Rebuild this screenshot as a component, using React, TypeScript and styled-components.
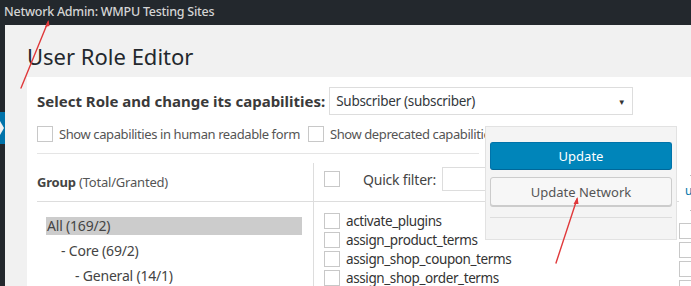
import React from 'react';
import styled, { createGlobalStyle } from 'styled-components';

type GroupItem = { label: string; level: number; active?: boolean };

const groups: GroupItem[] = [
  { label: 'All (169/2)', level: 0, active: true },
  { label: '- Core (69/2)', level: 1 },
  { label: '- General (14/1)', level: 2 },
];

const caps = [
  'activate_plugins',
  'assign_product_terms',
  'assign_shop_coupon_terms',
  'assign_shop_order_terms',
];

const GlobalStyle = createGlobalStyle`
  html, body {
    margin: 0;
    padding: 0;
    overflow: hidden;
  }
  body {
    font-family: "Noto Sans", "Open Sans", sans-serif;
    color: #444;
  }
`;

export default function App() {
  return (
    <>
      <GlobalStyle />
      <Screen>
        <TitleBar>Network Admin: WMPU Testing Sites</TitleBar>
        <Body>
          <Sidebar>
            <ActiveItem />
          </Sidebar>
          <Main>
            <Heading>User Role Editor</Heading>
            <Panel>
              <RoleRow>
                <RoleLabel>Select Role and change its capabilities:</RoleLabel>
                <RoleSelect>
                  <span>Subscriber (subscriber)</span>
                  <Caret>▼</Caret>
                </RoleSelect>
              </RoleRow>
              <OptionsRow>
                <Option>
                  <Box />
                  Show capabilities in human readable form
                </Option>
                <Option>
                  <Box />
                  Show deprecated capabilities
                </Option>
              </OptionsRow>
              <Columns>
                <GroupColumn>
                  <ColumnHead>
                    <b>Group</b>&nbsp;(Total/Granted)
                  </ColumnHead>
                  <GroupList>
                    {groups.map((g) => (
                      <GroupRow key={g.label} $level={g.level} $active={g.active}>
                        {g.label}
                      </GroupRow>
                    ))}
                  </GroupList>
                </GroupColumn>
                <CapsColumn>
                  <ColumnHead>
                    <Box />
                    <FilterLabel>Quick filter:</FilterLabel>
                    <FilterInput />
                  </ColumnHead>
                  <CapsList>
                    {caps.map((c) => (
                      <CapRow key={c}>
                        <Box />
                        <CapName>{c}</CapName>
                      </CapRow>
                    ))}
                  </CapsList>
                </CapsColumn>
                <SideColumn>
                  <SideRule />
                  <SideLink>u</SideLink>
                  <SideRule />
                  <SideBoxes>
                    {caps.map((c) => (
                      <Box key={c} />
                    ))}
                  </SideBoxes>
                </SideColumn>
              </Columns>
            </Panel>
          </Main>
        </Body>
        <UpdateBox>
          <PrimaryButton>Update</PrimaryButton>
          <SecondaryButton>Update Network</SecondaryButton>
          <BoxRule />
        </UpdateBox>
        <Arrows width="691" height="286" viewBox="0 0 691 286">
          <g stroke="#e0393b" strokeWidth="1.4" fill="none" strokeLinecap="round">
            <line x1="21" y1="88" x2="48" y2="22" />
            <line x1="556" y1="263" x2="577" y2="199" />
          </g>
          <g fill="#e0393b">
            <polygon points="48.5,20 45,27 49.5,26" />
            <polygon points="577.5,197 573.5,204 578.5,204" />
          </g>
        </Arrows>
      </Screen>
    </>
  );
}

const Screen = styled.div`
  position: relative;
  width: 691px;
  height: 286px;
  overflow: hidden;
  background: #f1f1f1;
`;

const TitleBar = styled.div`
  height: 25px;
  background: #23282d;
  color: #d4d4d4;
  font-size: 12.5px;
  font-weight: 500;
  letter-spacing: -0.25px;
  line-height: 23px;
  padding-left: 4px;
  white-space: nowrap;
`;

const Body = styled.div`
  display: flex;
  height: 261px;
`;

const Sidebar = styled.div`
  width: 5px;
  flex: none;
  background: #23282d;
  padding-top: 87px;
`;

const ActiveItem = styled.div`
  position: relative;
  height: 32px;
  background: #0073aa;

  &::after {
    content: '';
    position: absolute;
    left: 0;
    top: 9px;
    border: 7px solid transparent;
    border-left: 4px solid #f1f1f1;
    border-right-width: 0;
  }
`;

const Main = styled.div`
  flex: 1;
  padding: 0 0 0 22px;
  min-width: 0;
`;

const Heading = styled.h1`
  margin: 0;
  padding: 17px 0 0;
  height: 35px;
  font-size: 22px;
  font-weight: 400;
  line-height: 29px;
  color: #23282d;
`;

const Panel = styled.div`
  background: #fff;
  height: 209px;
  padding: 10px 0 0 10px;
`;

const RoleRow = styled.div`
  display: flex;
  align-items: center;
  gap: 4px;
`;

const RoleLabel = styled.span`
  font-size: 15px;
  font-weight: 700;
  color: #3a3a3a;
  white-space: nowrap;
`;

const RoleSelect = styled.div`
  display: flex;
  align-items: center;
  justify-content: space-between;
  width: 289px;
  height: 26px;
  padding: 0 7px 0 6px;
  border: 1px solid #ddd;
  font-size: 13.5px;
  letter-spacing: -0.3px;
  color: #32373c;
`;

const Caret = styled.span`
  font-size: 8px;
  color: #333;
`;

const OptionsRow = styled.div`
  display: flex;
  gap: 8px;
  margin-top: 10px;
  padding-bottom: 10px;
  width: 442px;
  border-bottom: 1px solid #e5e5e5;
  white-space: nowrap;
`;

const Option = styled.label`
  display: flex;
  align-items: center;
  gap: 6px;
  font-size: 13px;
  letter-spacing: -0.4px;
  color: #555;
`;

const Box = styled.span`
  display: inline-block;
  flex: none;
  width: 14px;
  height: 14px;
  border: 1px solid #c8c8c8;
  background: #fff;
`;

const Columns = styled.div`
  display: grid;
  grid-template-columns: 277px 365px 60px;
  margin-top: 9px;
`;

const GroupColumn = styled.div`
  border-right: 1px solid #ddd;
`;

const ColumnHead = styled.div`
  display: flex;
  align-items: center;
  height: 38px;
  border-bottom: 1px solid #ddd;
  font-size: 13px;
  letter-spacing: -0.2px;
  color: #555;
  white-space: nowrap;

  b {
    color: #444;
  }
`;

const GroupList = styled.div`
  display: flex;
  flex-direction: column;
  gap: 7px;
  padding: 15px 11px 0 9px;
`;

const GroupRow = styled.div<{ $level: number; $active?: boolean }>`
  height: 18px;
  line-height: 18px;
  padding-left: ${(p) => 1 + p.$level * 14}px;
  font-size: 14px;
  letter-spacing: -0.2px;
  color: #444;
  background: ${(p) => (p.$active ? '#ccc' : 'transparent')};
`;

const CapsColumn = styled.div`
  padding-left: 10px;

  ${ColumnHead} {
    margin-left: -10px;
    padding-left: 10px;
    padding-bottom: 6px;
    height: 32px;
  }
`;

const FilterLabel = styled.span`
  margin-left: 23px;
  font-size: 14px;
  color: #444;
`;

const FilterInput = styled.span`
  width: 120px;
  height: 22px;
  margin-left: 6px;
  border: 1px solid #ddd;
  background: #fff;
`;

const CapsList = styled.div`
  display: flex;
  flex-direction: column;
  gap: 3px;
  padding-top: 11px;
`;

const CapRow = styled.div`
  display: flex;
  align-items: center;
  gap: 6px;
  height: 16px;
`;

const CapName = styled.span`
  font-size: 13.5px;
  letter-spacing: -0.4px;
  color: #333;
  white-space: nowrap;
`;

const SideColumn = styled.div`
  display: flex;
  flex-direction: column;
`;

const SideRule = styled.div`
  width: 12px;
  height: 1px;
  margin: 12px 0 0 11px;
  background: #bbb;
`;

const SideLink = styled.span`
  margin: 8px 0 0 6px;
  font-size: 12px;
  line-height: 14px;
  color: #0073aa;
`;

const SideBoxes = styled.div`
  display: flex;
  flex-direction: column;
  gap: 3px;
  padding-top: 12px;
`;

const UpdateBox = styled.div`
  position: absolute;
  left: 485px;
  top: 126px;
  width: 182px;
  height: 97px;
  padding: 15px 4px 0;
  background: #f4f4f4;
  border: 1px solid #e2e2e2;
  display: flex;
  flex-direction: column;
  gap: 7px;
`;

const PrimaryButton = styled.button`
  height: 28px;
  border: 1px solid #0073aa;
  border-bottom-color: #006799;
  border-radius: 3px;
  background: #0085ba;
  color: #fff;
  font-family: inherit;
  font-size: 13px;
`;

const SecondaryButton = styled.button`
  height: 29px;
  border: 1px solid #ccc;
  border-radius: 3px;
  background: #f7f7f7;
  box-shadow: 0 1px 0 #ccc;
  color: #555;
  font-family: inherit;
  font-size: 13px;
`;

const BoxRule = styled.div`
  height: 1px;
  margin-top: 4px;
  background: #ddd;
`;

const Arrows = styled.svg`
  position: absolute;
  left: 0;
  top: 0;
  pointer-events: none;
`;
